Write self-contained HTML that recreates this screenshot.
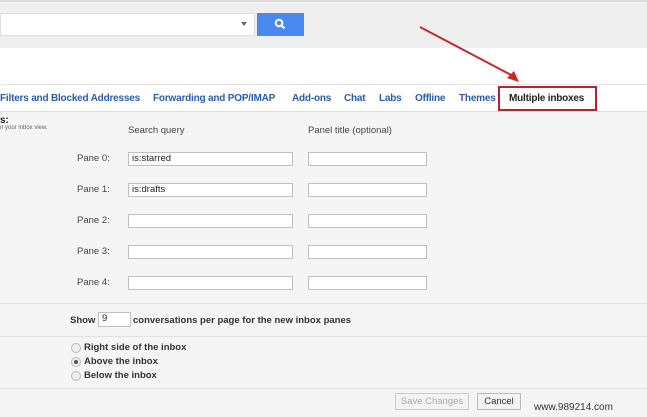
<!DOCTYPE html><html><head><style>
body{margin:0;width:647px;height:417px;overflow:hidden;background:#f5f5f5;font-family:"Liberation Sans",Arial,sans-serif;position:relative;font-size:10px;color:#222}
.a{position:absolute}
.inp{position:absolute;background:#fff;border:1px solid #c0c0c0;height:14px;box-sizing:border-box;font-size:9.5px;padding-left:3px;line-height:12px}
.lbl{position:absolute;font-size:9.5px;color:#444}
.tab{position:absolute;top:93px;font-size:10px;font-weight:bold;color:#2a5db0;letter-spacing:-0.2px}
.rad{position:absolute;width:8px;height:8px;border-radius:50%;border:1px solid #bbb;background:#eee;left:71px}
</style></head><body>
<div class="a" style="left:0;top:0;width:647px;height:48px;background:#efefef"></div>
<div class="a" style="left:0;top:0;width:647px;height:2px;background:#ddd"></div>
<div class="a" style="left:0;top:13px;width:255px;height:23px;background:#fff;border:1px solid #ddd;box-sizing:border-box"></div>
<div class="a" style="left:241px;top:22px;width:0;height:0;border-left:3px solid transparent;border-right:3px solid transparent;border-top:4px solid #666"></div>
<div class="a" style="left:257px;top:13px;width:47px;height:23px;background:#4a8af0"></div>
<svg class="a" style="left:274px;top:18px" width="12" height="12"><circle cx="5" cy="5" r="3.3" stroke="#fff" stroke-width="2" fill="none"/><path d="M7.5 7.5L10.5 10.5" stroke="#fff" stroke-width="2.2"/></svg>
<div class="a" style="left:0;top:48px;width:647px;height:36px;background:#fff"></div>
<div class="a" style="left:0;top:84px;width:647px;height:1px;background:#e4e4e4"></div>
<div class="a" style="left:0;top:85px;width:647px;height:26px;background:#fff;border-bottom:1px solid #ddd"></div>
<div class="tab" style="left:0">Filters and Blocked Addresses</div>
<div class="tab" style="left:153px">Forwarding and POP/IMAP</div>
<div class="tab" style="left:292px">Add-ons</div>
<div class="tab" style="left:344px">Chat</div>
<div class="tab" style="left:379px">Labs</div>
<div class="tab" style="left:415px">Offline</div>
<div class="tab" style="left:459px">Themes</div>
<div class="a" style="left:498px;top:86px;width:99px;height:25px;border:2px solid #b0262b;box-sizing:border-box;background:#fff"></div>
<div class="tab" style="left:509px;color:#222">Multiple inboxes</div>
<svg class="a" style="left:415px;top:22px" width="110" height="65"><path d="M5 5L100 55" stroke="#c8282c" stroke-width="2"/><path d="M104 60L92 56L99 49Z" fill="#c8282c"/></svg>
<div class="a" style="left:0;top:115px;font-size:10px;font-weight:bold">s:</div>
<div class="a" style="left:0;top:125px;font-size:6px;color:#666">n your inbox view.</div>
<div class="lbl" style="left:128px;top:125px">Search query</div>
<div class="lbl" style="left:308px;top:125px">Panel title (optional)</div>
<div class="lbl" style="left:77px;top:153px">Pane 0:</div><div class="inp" style="left:128px;top:152px;width:165px">is:starred</div><div class="inp" style="left:308px;top:152px;width:119px"></div>
<div class="lbl" style="left:77px;top:184px">Pane 1:</div><div class="inp" style="left:128px;top:183px;width:165px">is:drafts</div><div class="inp" style="left:308px;top:183px;width:119px"></div>
<div class="lbl" style="left:77px;top:215px">Pane 2:</div><div class="inp" style="left:128px;top:214px;width:165px"></div><div class="inp" style="left:308px;top:214px;width:119px"></div>
<div class="lbl" style="left:77px;top:246px">Pane 3:</div><div class="inp" style="left:128px;top:245px;width:165px"></div><div class="inp" style="left:308px;top:245px;width:119px"></div>
<div class="lbl" style="left:77px;top:277px">Pane 4:</div><div class="inp" style="left:128px;top:276px;width:165px"></div><div class="inp" style="left:308px;top:276px;width:119px"></div>
<div class="a" style="left:0;top:303px;width:647px;height:1px;background:#e2e2e2"></div>
<div class="a" style="left:70px;top:315px;font-size:9.5px;font-weight:bold;color:#333">Show</div>
<div class="inp" style="left:98px;top:312px;width:33px;height:15px">9</div>
<div class="a" style="left:133px;top:315px;font-size:9.5px;font-weight:bold;color:#333">conversations per page for the new inbox panes</div>
<div class="a" style="left:0;top:336px;width:647px;height:1px;background:#e2e2e2"></div>
<div class="rad" style="top:343px"></div><div class="a" style="left:84px;top:342px;font-size:9.5px;font-weight:bold;color:#333">Right side of the inbox</div>
<div class="rad" style="top:357px"></div><div class="a" style="left:74px;top:360px;width:4px;height:4px;border-radius:50%;background:#555"></div><div class="a" style="left:84px;top:356px;font-size:9.5px;font-weight:bold;color:#333">Above the inbox</div>
<div class="rad" style="top:371px"></div><div class="a" style="left:84px;top:370px;font-size:9.5px;font-weight:bold;color:#333">Below the inbox</div>
<div class="a" style="left:0;top:388px;width:647px;height:1px;background:#e2e2e2"></div>
<div class="a" style="left:395px;top:393px;width:72px;height:15px;border:1px solid #ccc;background:#f3f3f3;font-size:9.5px;color:#aaa;text-align:center;line-height:15px">Save Changes</div>
<div class="a" style="left:477px;top:393px;width:42px;height:15px;border:1px solid #bbb;background:#f3f3f3;font-size:9.5px;color:#333;text-align:center;line-height:15px">Cancel</div>
<div class="a" style="left:534px;top:402px;font-size:10px;color:#333">www.989214.com</div>
</body></html>
